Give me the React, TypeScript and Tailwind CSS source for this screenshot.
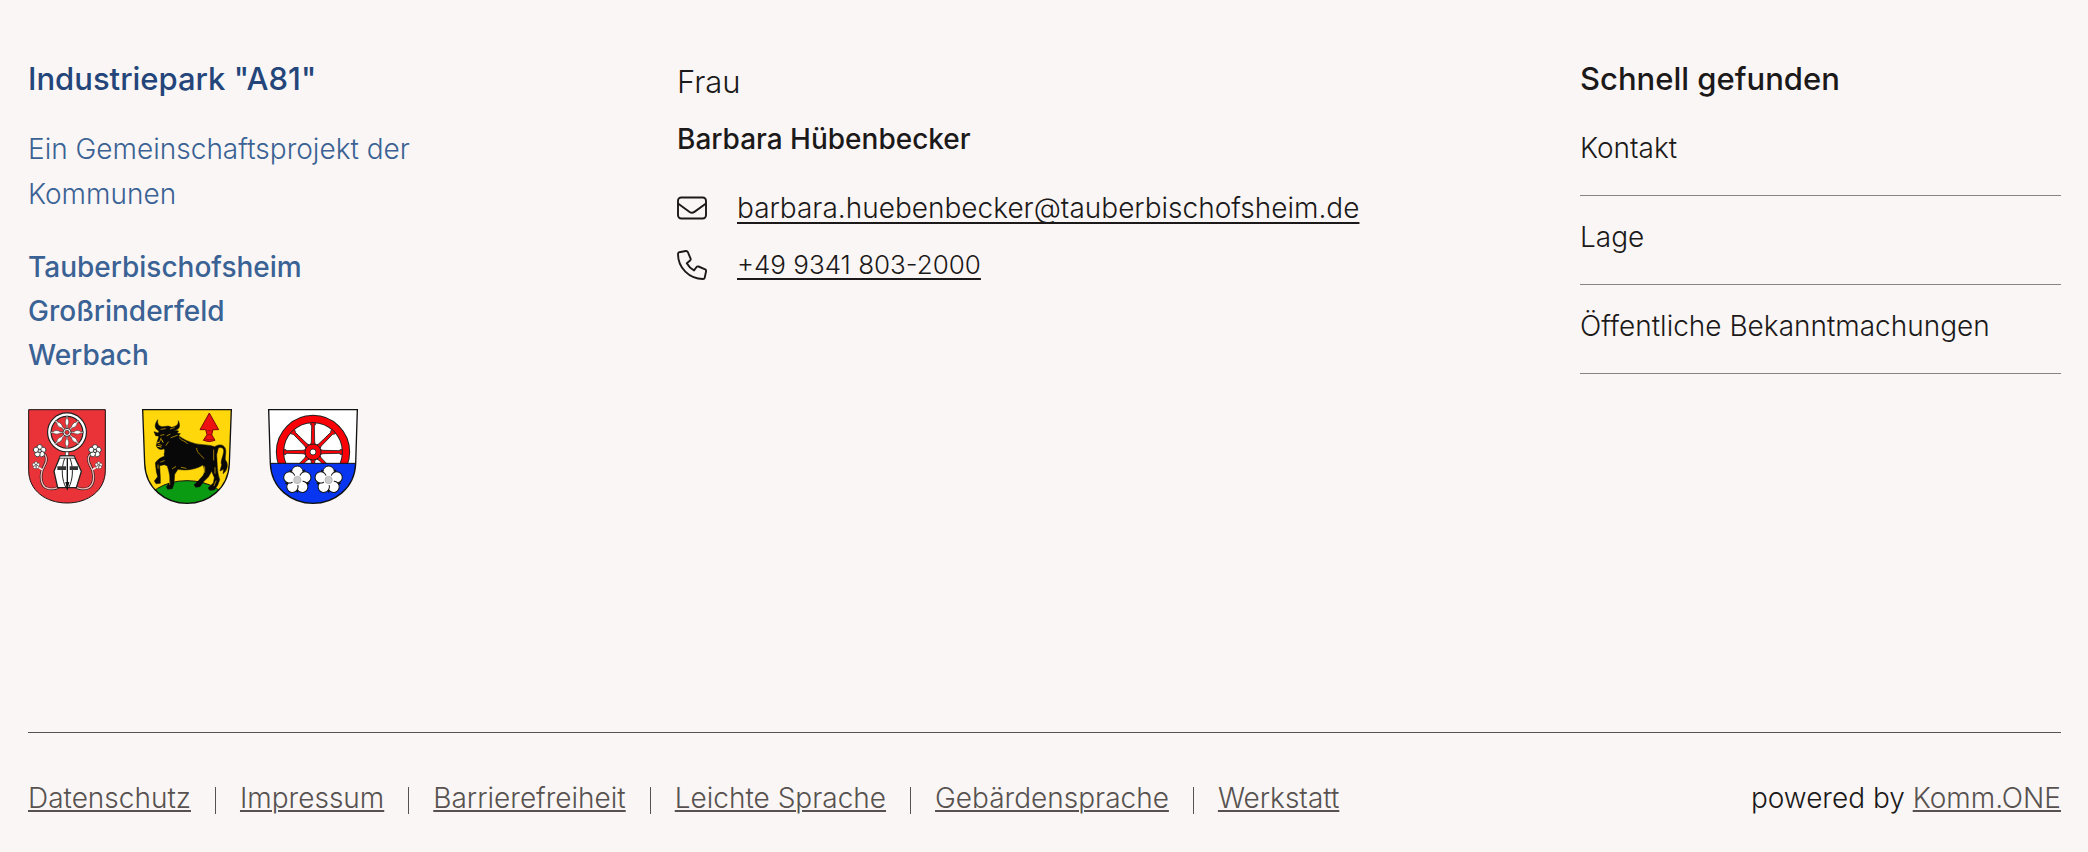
const communities = ["Tauberbischofsheim", "Großrinderfeld", "Werbach"];

const quickLinks = ["Kontakt", "Lage", "Öffentliche Bekanntmachungen"];

const metaLinks = [
    "Datenschutz",
    "Impressum",
    "Barrierefreiheit",
    "Leichte Sprache",
    "Gebärdensprache",
    "Werkstatt",
];

function MailIcon() {
    return (
        <svg viewBox="0 0 30 30" className="size-[30px] shrink-0" fill="none" stroke="#1b1919" strokeWidth="1.9" strokeLinejoin="round" aria-hidden="true">
            <rect x="1" y="4.5" width="28" height="21" rx="3.2" />
            <path d="M1 10.5 L12.6 18.9 Q15 20.6 17.4 18.9 L29 10.5" />
        </svg>
    );
}

function PhoneIcon() {
    return (
        <svg viewBox="0 0 30 30" className="size-[30px] shrink-0" fill="none" stroke="#1b1919" strokeWidth="1.9" strokeLinejoin="round" aria-hidden="true">
            <path d="M2.2 2.2 L8.8 1 Q10.2 0.8 10.8 2 L13.6 8.6 Q14 9.8 13.1 10.6 L9.8 13.3 Q12.4 18 17 20.4 L19.6 17 Q20.4 16.1 21.5 16.5 L28.2 19.3 Q29.3 19.9 29.1 21.1 L27.7 27.7 Q27.4 29 26 29 A25 25 0 0 1 1 4 Q1 2.5 2.2 2.2 Z" />
        </svg>
    );
}

function Rose({ x, y, r }: { x: number; y: number; r: number }) {
    return (
        <g transform={`translate(${x} ${y}) scale(${r})`} stroke="#222" strokeWidth="0.12">
            {[0, 72, 144, 216, 288].map((a) => (
                <circle key={a} cx="0" cy="-0.6" r="0.42" fill="#fff" transform={`rotate(${a})`} />
            ))}
            <circle r="0.27" fill="#d8d8d8" />
        </g>
    );
}

function TauberbischofsheimArms() {
    return (
        <svg viewBox="24 26 234 285" className="h-[95px] w-[78px]" role="img" aria-label="Wappen Tauberbischofsheim">
            <path d="M26 28 H256 V210 C256 270 205 308 141 308 C77 308 26 270 26 210 Z" fill="#e93338" stroke="#1a1010" strokeWidth="3" />
            <g fill="none" strokeLinecap="round">
                <path d="M75 163 C86 180 72 196 66 211 C60 232 64 253 76 261 C88 268 105 266 115 261" stroke="#222" strokeWidth="8" />
                <path d="M75 163 C86 180 72 196 66 211 C60 232 64 253 76 261 C88 268 105 266 115 261" stroke="#f4b8b4" strokeWidth="4" />
                <path d="M209 163 C198 180 212 196 218 211 C224 232 220 253 208 261 C196 268 179 266 169 261" stroke="#222" strokeWidth="8" />
                <path d="M209 163 C198 180 212 196 218 211 C224 232 220 253 208 261 C196 268 179 266 169 261" stroke="#f4b8b4" strokeWidth="4" />
                <path d="M52 199 L65 207 M232 199 L219 207" stroke="#fff" strokeWidth="4" />
            </g>
            <Rose x={59} y={152} r={19} />
            <Rose x={225} y={152} r={19} />
            <Rose x={48} y={195} r={11} />
            <Rose x={236} y={195} r={11} />
            <path d="M136 148 H146 V170 H136 Z" fill="#fff" stroke="#222" strokeWidth="2" />
            <circle cx="141" cy="96" r="53" fill="none" stroke="#222" strokeWidth="14" />
            <circle cx="141" cy="96" r="53" fill="none" stroke="#fff" strokeWidth="7" />
            {[0, 45, 90, 135, 180, 225, 270, 315].map((a) => (
                <path
                    key={a}
                    d="M139 47 H143 V55 C148 60 147 70 143 75 V84 H139 V75 C135 70 134 60 139 55 Z"
                    fill="#fff"
                    stroke="#333"
                    strokeWidth="1.8"
                    transform={`rotate(${a} 141 96)`}
                />
            ))}
            <circle cx="141" cy="96" r="12" fill="#fff" stroke="#222" strokeWidth="2.5" />
            <circle cx="141" cy="96" r="6.5" fill="#e93338" stroke="#222" strokeWidth="2" />
            <path d="M121 167 H162 L184 213 L169 262 H113 L102 213 Z" fill="#fff" stroke="#222" strokeWidth="4" />
            <path d="M121 167 L162 167 L165 174 H118 Z" fill="#ddd" stroke="#222" strokeWidth="2" />
            <path d="M134 174 C122 205 126 240 138 262 M150 174 C162 205 158 240 146 262" fill="none" stroke="#222" strokeWidth="3" />
            <path d="M112 198 H138 V209 H112 Z M149 198 H174 V209 H149 Z" fill="#333" />
            <path d="M142 174 V268" stroke="#111" strokeWidth="4" />
            <path d="M136 245 H148 L142 270 Z" fill="#111" />
        </svg>
    );
}

function GrossrinderfeldArms() {
    return (
        <svg viewBox="21 26 270 285" className="h-[95px] w-[90px]" role="img" aria-label="Wappen Großrinderfeld">
            <clipPath id="gr-shield">
                <path d="M23 28 H289 L283 190 C280 265 220 309 156 309 C92 309 32 265 29 190 Z" />
            </clipPath>
            <g clipPath="url(#gr-shield)">
                <path d="M20 20 H300 V320 H20 Z" fill="#ffd70a" />
                <ellipse cx="156" cy="320" rx="125" ry="79" fill="#0b9b12" stroke="#111" strokeWidth="3" />
            </g>
            <path d="M23 28 H289 L283 190 C280 265 220 309 156 309 C92 309 32 265 29 190 Z" fill="none" stroke="#111" strokeWidth="4" />
            <path d="M223 38 L251 88 H234 L230 103 L240 120 Q223 128 205 120 L216 103 L212 88 H195 Z" fill="#ee1111" stroke="#7c0808" strokeWidth="3" strokeLinejoin="round" />
            <path d="M217 91 H230 M215 103 H232 M208 116 Q222 121 237 116" fill="none" stroke="#8e0909" strokeWidth="2" />
            {/* bull */}
            <path d="M68 58 C58 73 57 84 72 92 L70 98 L57 94 L62 106 L72 108 C68 120 65 126 64 136 C67 147 78 150 87 145 C93 153 84 160 89 168 C78 170 66 179 61 188 L64 214 L68 229 L58 242 L63 250 L76 249 L76 232 L74 196 L88 193 L97 197 C103 218 107 232 103 247 L94 259 L98 267 L112 265 L117 250 L119 222 L129 207 C150 211 181 209 204 194 C211 209 209 222 200 230 L190 241 L177 253 L182 261 L195 259 L207 243 L220 230 L230 213 L238 232 L235 248 L219 263 L224 270 L238 269 L248 255 L254 238 C246 215 247 190 245 163 L250 143 C260 139 267 144 266 154 C264 170 255 184 260 193 L255 212 L266 207 L264 220 C275 213 281 196 274 183 C267 176 274 164 272 148 C269 132 253 130 239 139 C221 132 199 134 181 130 C162 125 144 116 131 106 L136 100 L126 98 L131 92 L116 89 C133 90 138 77 130 61 C131 77 118 78 110 81 L100 77 L82 79 C71 78 67 70 68 58 Z" fill="#080808" stroke="#111" strokeWidth="1.5" strokeLinejoin="round" />
            <g fill="none" stroke="#e6b800" strokeWidth="2" strokeLinecap="round">
                <path d="M78 87 L91 85 M106 86 L118 82 M77 105 L87 103 M78 113 L75 122 M96 106 L105 102 M70 132 L80 135 M93 135 L100 125 M108 112 L127 105" />
                <path d="M66 128 L74 125 M68 138 L78 140 M80 118 L84 126" strokeWidth="3" />
                <path d="M133 113 C142 124 152 121 157 130 M185 144 C184 158 200 164 206 174 M236 149 V179 M69 194 V204 M77 185 L88 181 M112 205 L122 199 M139 201 L153 204 M209 199 V216 M240 202 V219 M104 242 V252 M243 242 L237 256" />
            </g>
        </svg>
    );
}

function WerbachArms() {
    return (
        <svg viewBox="24 26 270 285" className="h-[95px] w-[90px]" role="img" aria-label="Wappen Werbach">
            <clipPath id="we-shield">
                <path d="M26 28 H292 L287 190 C284 265 222 309 159 309 C96 309 34 265 31 190 Z" />
            </clipPath>
            <g clipPath="url(#we-shield)">
                <path d="M20 20 H300 V320 H20 Z" fill="#fff" />
                <circle cx="159" cy="155" r="99" fill="none" stroke="#222" strokeWidth="25" />
                <circle cx="159" cy="155" r="99" fill="none" stroke="#fb0007" strokeWidth="19" />
                {[0, 45, 90, 135, 180, 225, 270, 315].map((a) => (
                    <path
                        key={a}
                        d="M152 67 H166 V74 H163 L164 125 L167 135 H151 L154 125 L155 74 H152 Z"
                        fill="#fb0007"
                        stroke="#222"
                        strokeWidth="2.5"
                        transform={`rotate(${a} 159 155)`}
                    />
                ))}
                <circle cx="159" cy="155" r="24" fill="#fb0007" stroke="#222" strokeWidth="3" />
                <circle cx="159" cy="155" r="9" fill="#fff" stroke="#222" strokeWidth="2.5" />
                <path d="M20 189 H300 V320 H20 Z" fill="#0735f0" stroke="#111" strokeWidth="3" />
            </g>
            {[112, 206].map((x) => (
                <g key={x} transform={`translate(${x} 239)`}>
                    {[36, 108, 180, 252, 324].map((a) => (
                        <path key={a} d="M-8 -22 L0 -40 L8 -22 Z" fill="#111" transform={`rotate(${a})`} />
                    ))}
                    {[0, 72, 144, 216, 288].map((a) => (
                        <circle key={a} cy="-25" r="17" fill="#fff" stroke="#111" strokeWidth="3" transform={`rotate(${a})`} />
                    ))}
                    <circle r="16" fill="#fff" />
                    <circle r="11" fill="#ccc" stroke="#999" strokeWidth="1.5" />
                </g>
            ))}
            <path d="M26 28 H292 L287 190 C284 265 222 309 159 309 C96 309 34 265 31 190 Z" fill="none" stroke="#111" strokeWidth="4" />
        </svg>
    );
}

export default function App() {
    return (
        <footer className="bg-[#faf6f5] pr-[27px] pl-7 pt-[59px] pb-[31px] font-['Inter',sans-serif] text-[28px] leading-[45px] font-light text-[#1b1919]">
            <div className="grid grid-cols-[649fr_903fr_481fr] pb-[228px]">
                <section className="text-[#3a6294]">
                    <h2 className="text-[31px] leading-10 font-medium text-[#23457a]">Industriepark "A81"</h2>
                    <p className="mt-7 max-w-[420px]">Ein Gemeinschaftsprojekt der Kommunen</p>
                    <ul className="mt-7 leading-[44px] font-medium">
                        {communities.map((name) => (
                            <li key={name}>{name}</li>
                        ))}
                    </ul>
                    <div className="mt-8 flex gap-9">
                        <TauberbischofsheimArms />
                        <GrossrinderfeldArms />
                        <WerbachArms />
                    </div>
                </section>

                <address className="pt-px not-italic leading-[44px]">
                    <p className="text-[31px]">Frau</p>
                    <p className="mt-[13px] font-medium">Barbara Hübenbecker</p>
                    <div className="mt-[25px] flex items-center gap-[30px]">
                        <MailIcon />
                        <a href="#mail" className="underline decoration-2 underline-offset-4 [text-decoration-skip-ink:none]">
                            barbara.huebenbecker@tauberbischofsheim.de
                        </a>
                    </div>
                    <div className="mt-[13px] flex items-center gap-[30px]">
                        <PhoneIcon />
                        <a href="#tel" className="text-[26px] underline decoration-2 underline-offset-4">
                            +49 9341 803-2000
                        </a>
                    </div>
                </address>

                <nav aria-label="Schnell gefunden">
                    <h2 className="text-[31px] leading-10 font-medium">Schnell gefunden</h2>
                    <ul className="mt-2">
                        {quickLinks.map((label) => (
                            <li key={label} className="border-b border-[#888482] pt-[19px] pb-6">
                                <a href="#" className="block">{label}</a>
                            </li>
                        ))}
                    </ul>
                </nav>
            </div>

            <div className="flex items-center justify-between border-t border-[#575250] pt-[43px]">
                <ul className="flex items-center gap-6 text-[#575250]">
                    {metaLinks.map((label, i) => (
                        <li key={label} className="flex items-center gap-6">
                            {i > 0 && <span className="mt-1 h-[27px] w-px bg-[#575250]" />}
                            <a href="#" className="underline decoration-2 underline-offset-2">{label}</a>
                        </li>
                    ))}
                </ul>
                <p>
                    powered by <a href="#" className="text-[#575250] underline decoration-2 underline-offset-2">Komm.ONE</a>
                </p>
            </div>
        </footer>
    );
}
